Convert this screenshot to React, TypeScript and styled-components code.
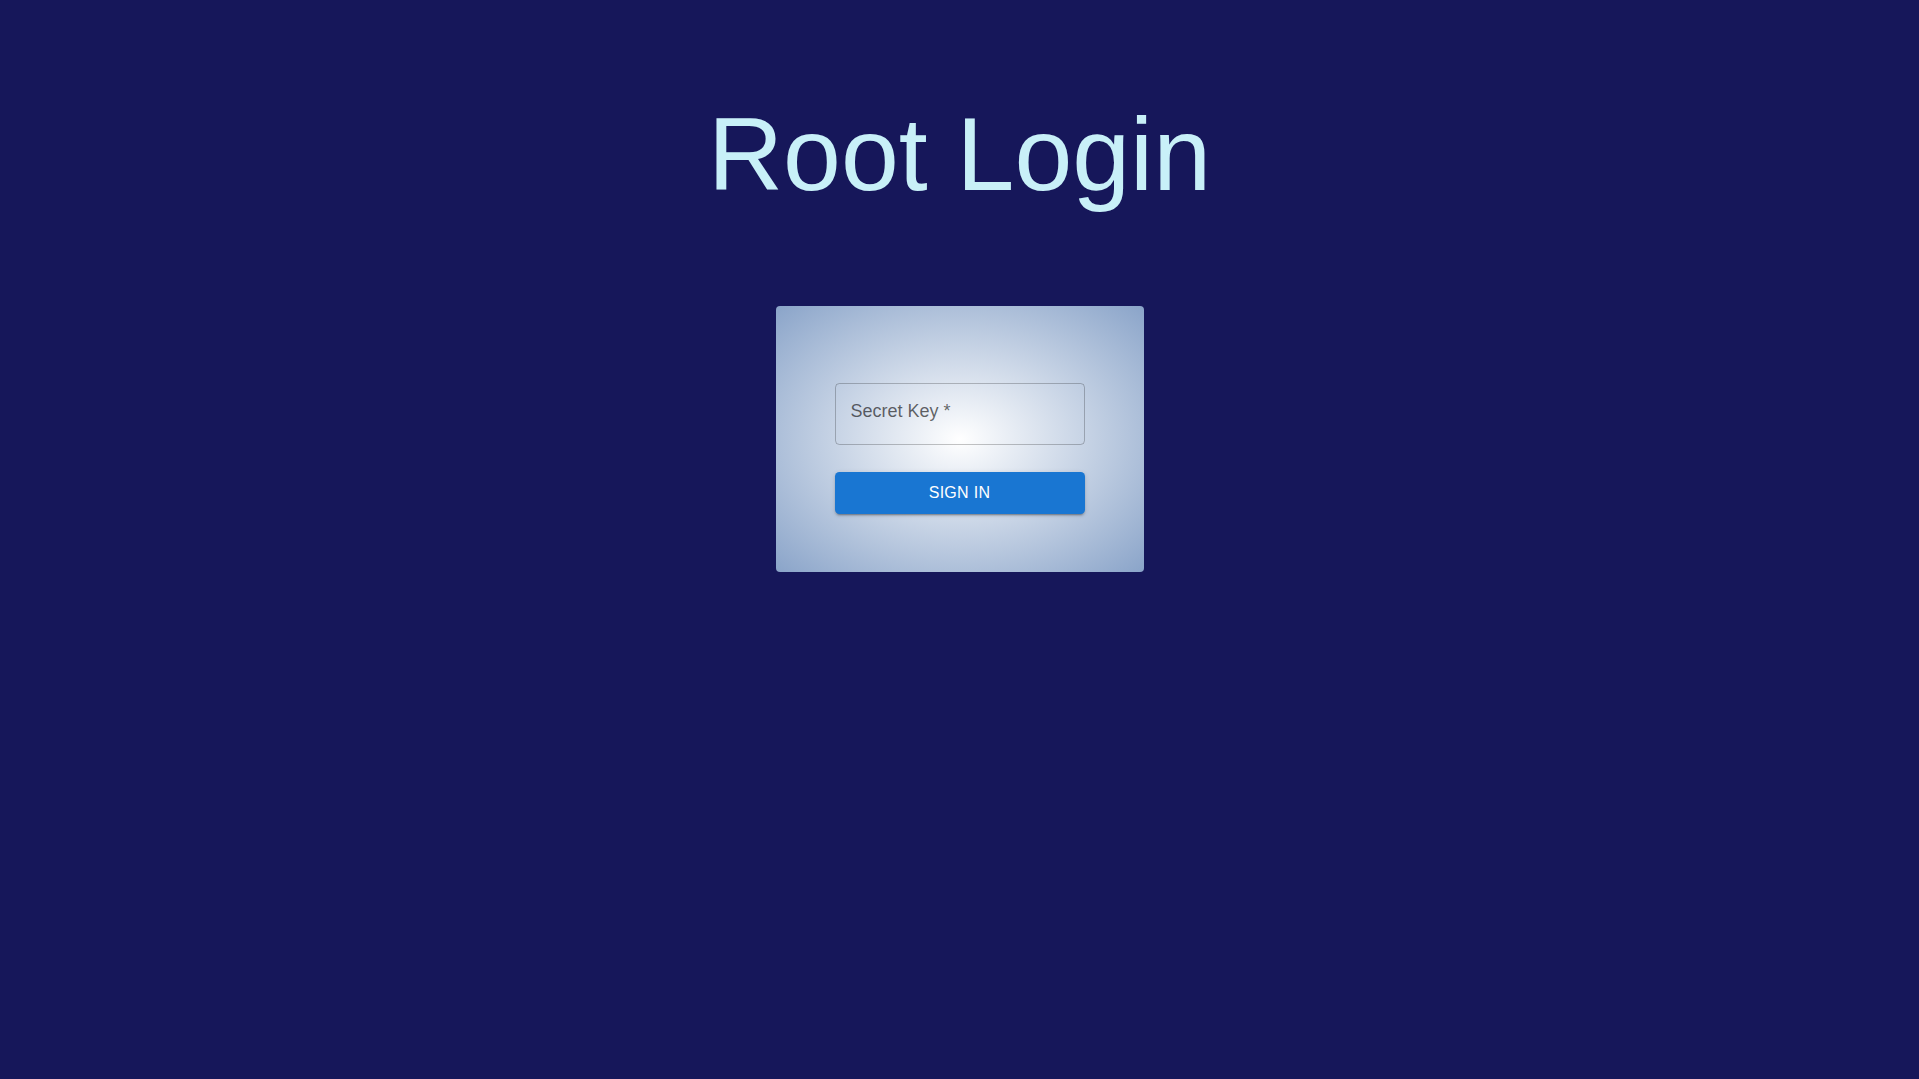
import React from 'react';
import styled, { createGlobalStyle } from 'styled-components';

const GlobalStyle = createGlobalStyle`
  html, body {
    margin: 0;
    padding: 0;
    min-height: 100%;
    background: #16175a;
  }
  body {
    font-family: 'Liberation Sans', Arial, sans-serif;
  }
`;

export default function App() {
  return (
    <>
      <GlobalStyle />
      <Page>
        <Title>Root Login</Title>
        <Card>
          <KeyInput type='password' placeholder='Secret Key *' />
          <SignInButton type='button'>Sign In</SignInButton>
        </Card>
      </Page>
    </>
  );
}

const Page = styled.main`
  min-height: 1079px;
  display: flex;
  flex-direction: column;
  align-items: center;
  padding-top: 95px;
  box-sizing: border-box;
`;

const Title = styled.h1`
  margin: 0 0 92px;
  font-family: 'Liberation Sans', Arial, sans-serif;
  font-size: 104px;
  font-weight: 400;
  line-height: normal;
  color: #c8f0f8;
`;

const Card = styled.section`
  width: 368px;
  box-sizing: border-box;
  padding: 77px 59px 58px;
  display: flex;
  flex-direction: column;
  gap: 27px;
  border-radius: 4px;
  background: radial-gradient(#ffffff, #8aa4c9);
`;

const KeyInput = styled.input`
  height: 61.5px;
  box-sizing: border-box;
  padding: 0 15px 5px;
  border: 1px solid rgba(0, 0, 0, 0.23);
  border-radius: 4.4px;
  background: transparent;
  font-family: 'Liberation Sans', Arial, sans-serif;
  font-size: 18px;
  color: rgba(0, 0, 0, 0.87);
  outline: none;

  &::placeholder {
    color: rgba(0, 0, 0, 0.6);
  }
`;

const SignInButton = styled.button`
  height: 42px;
  border: none;
  border-radius: 4.4px;
  background: #1976d2;
  color: #fff;
  font-family: 'Liberation Sans', Arial, sans-serif;
  font-size: 16px;
  font-weight: 500;
  letter-spacing: 0.3px;
  text-transform: uppercase;
  cursor: pointer;
  box-shadow: 0 3px 1px -2px rgba(0, 0, 0, 0.2), 0 2px 2px 0 rgba(0, 0, 0, 0.14),
    0 1px 5px 0 rgba(0, 0, 0, 0.12);
`;
